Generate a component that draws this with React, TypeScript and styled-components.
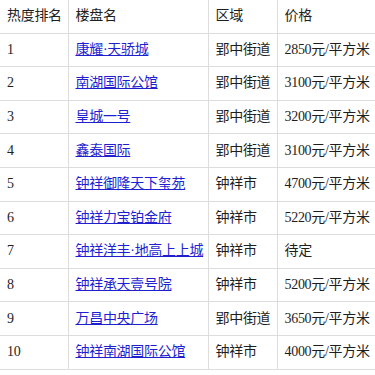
import React from "react";
import styled, { createGlobalStyle } from "styled-components";

const Global = createGlobalStyle`
  html, body {
    margin: 0;
    padding: 0;
    background: #ffffff;
    overflow: hidden;
  }
`;

type Row = { rank: string; name: string; area: string; price: string };

const rows: Row[] = [
  { rank: "1", name: "康耀·天骄城", area: "郢中街道", price: "2850元/平方米" },
  { rank: "2", name: "南湖国际公馆", area: "郢中街道", price: "3100元/平方米" },
  { rank: "3", name: "皇城一号", area: "郢中街道", price: "3200元/平方米" },
  { rank: "4", name: "鑫泰国际", area: "郢中街道", price: "3100元/平方米" },
  { rank: "5", name: "钟祥御隆天下玺苑", area: "钟祥市", price: "4700元/平方米" },
  { rank: "6", name: "钟祥力宝铂金府", area: "钟祥市", price: "5220元/平方米" },
  { rank: "7", name: "钟祥洋丰·地高上上城", area: "钟祥市", price: "待定" },
  { rank: "8", name: "钟祥承天壹号院", area: "钟祥市", price: "5200元/平方米" },
  { rank: "9", name: "万昌中央广场", area: "郢中街道", price: "3650元/平方米" },
  { rank: "10", name: "钟祥南湖国际公馆", area: "钟祥市", price: "4000元/平方米" },
];

const Table = styled.table`
  width: 376px;
  border-collapse: collapse;
  table-layout: fixed;
  font-family: "Liberation Serif", "Noto Sans CJK SC", serif;
  font-size: 14px;
  letter-spacing: -0.3px;
  color: #1e1e1e;
`;

const Cell = styled.td<{ $w?: number }>`
  box-sizing: border-box;
  width: ${(p) => (p.$w ? `${p.$w}px` : "auto")};
  border: 1px solid #dddddd;
  padding: 6.3px 7px;
  line-height: 20px;
  white-space: nowrap;
  overflow: visible;
  text-align: left;
  font-weight: normal;

  &:first-child {
    border-left: 0;
  }
  &:last-child {
    border-right: 0;
  }
`;

const Head = styled(Cell).attrs({ as: "th" })`
  border-top: 0;
`;

const Link = styled.a`
  color: #1f1fd0;
  text-decoration: underline;
`;

export default function App() {
  return (
    <>
      <Global />
      <Table>
        <thead>
          <tr>
            <Head $w={68}>热度排名</Head>
            <Head $w={140}>楼盘名</Head>
            <Head $w={69}>区域</Head>
            <Head>价格</Head>
          </tr>
        </thead>
        <tbody>
          {rows.map((r) => (
            <tr key={r.rank}>
              <Cell>{r.rank}</Cell>
              <Cell>
                <Link href="#">{r.name}</Link>
              </Cell>
              <Cell>{r.area}</Cell>
              <Cell>{r.price}</Cell>
            </tr>
          ))}
        </tbody>
      </Table>
    </>
  );
}
